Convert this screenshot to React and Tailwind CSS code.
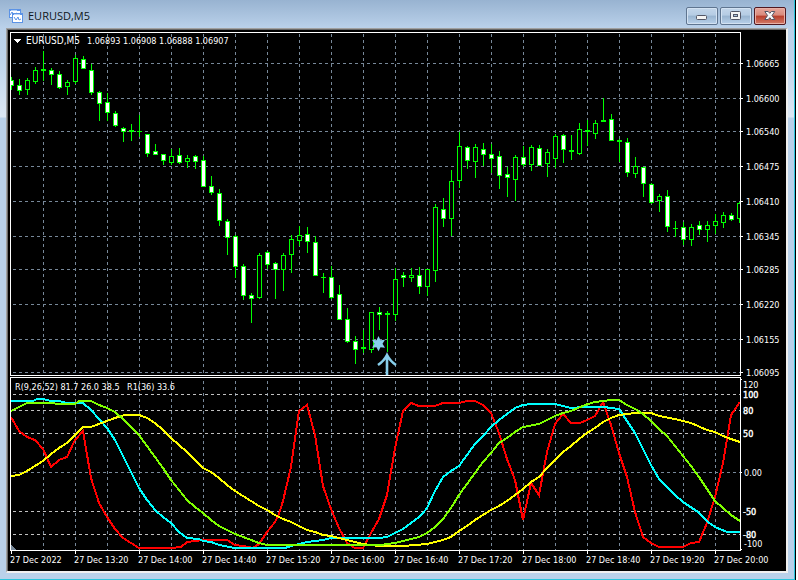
import React from "react";

// [high, body top, body bottom, low, kind] - w: filled, h: hollow
const candles = [
  [77, 80, 85, 89, "w"], [79, 85, 90, 94, "w"], [78, 80, 89, 94, "h"],
  [67, 70, 81, 83, "h"], [51, 69, 70, 80, "h"], [68, 70, 74, 84, "w"],
  [71, 74, 87, 88, "w"], [80, 82, 86, 94, "h"], [55, 58, 81, 83, "h"],
  [56, 59, 68, 68, "w"], [64, 70, 92, 94, "w"], [91, 92, 103, 120, "w"],
  [93, 102, 112, 120, "w"], [111, 113, 125, 126, "w"], [127, 128, 131, 141, "w"],
  [124, 130, 131, 140, "h"], [115, 131, 131, 136, "h"], [134, 134, 153, 156, "w"],
  [144, 151, 154, 154, "w"], [154, 154, 160, 164, "w"], [149, 156, 162, 164, "h"],
  [148, 155, 162, 163, "w"], [155, 158, 161, 167, "h"], [155, 156, 161, 168, "w"],
  [156, 160, 186, 186, "w"], [176, 186, 192, 194, "w"], [189, 193, 220, 225, "w"],
  [219, 221, 237, 254, "w"], [235, 236, 266, 277, "w"], [264, 266, 295, 299, "w"],
  [293, 295, 298, 322, "w"], [253, 255, 297, 298, "h"], [251, 252, 264, 268, "w"],
  [262, 263, 269, 298, "w"], [253, 255, 269, 290, "h"], [235, 239, 254, 272, "h"],
  [226, 235, 240, 245, "h"], [227, 234, 241, 252, "w"], [236, 242, 275, 275, "w"],
  [273, 277, 277, 292, "h"], [266, 277, 297, 298, "w"], [285, 294, 319, 319, "w"],
  [308, 319, 341, 342, "w"], [336, 341, 349, 363, "w"], [330, 347, 348, 352, "h"],
  [312, 312, 349, 352, "h"], [307, 312, 314, 329, "w"], [311, 313, 314, 351, "h"],
  [268, 279, 314, 320, "h"], [272, 275, 277, 286, "w"], [268, 275, 277, 281, "h"],
  [267, 275, 286, 293, "w"], [269, 269, 286, 295, "h"], [204, 207, 270, 281, "h"],
  [198, 209, 218, 226, "w"], [170, 181, 218, 235, "h"], [132, 146, 180, 187, "h"],
  [146, 147, 160, 168, "w"], [144, 147, 161, 177, "h"], [143, 149, 154, 165, "w"],
  [144, 154, 158, 172, "w"], [151, 156, 175, 188, "w"], [167, 174, 177, 196, "w"],
  [155, 157, 179, 200, "h"], [146, 157, 164, 166, "w"], [145, 147, 164, 170, "h"],
  [145, 148, 165, 165, "w"], [149, 152, 163, 176, "h"], [134, 136, 158, 167, "h"],
  [134, 135, 149, 162, "w"], [135, 150, 151, 159, "h"], [123, 129, 153, 154, "h"],
  [120, 130, 131, 145, "h"], [120, 123, 133, 138, "h"], [98, 120, 121, 121, "h"],
  [114, 119, 140, 140, "w"], [139, 140, 141, 161, "h"], [138, 142, 172, 176, "w"],
  [157, 166, 173, 177, "h"], [167, 167, 183, 196, "w"], [183, 184, 202, 203, "w"],
  [194, 196, 200, 211, "h"], [190, 196, 226, 231, "w"], [221, 228, 228, 236, "h"],
  [222, 227, 239, 244, "w"], [224, 227, 239, 245, "h"], [221, 225, 229, 234, "w"],
  [221, 225, 229, 241, "h"], [214, 221, 225, 233, "h"], [212, 215, 222, 227, "h"],
  [213, 215, 219, 220, "w"], [202, 203, 218, 222, "h"],
];

const prices = [
  ["1.06665", 63], ["1.06600", 98], ["1.06540", 131], ["1.06475", 166],
  ["1.06410", 201], ["1.06345", 236], ["1.06285", 269], ["1.06220", 304],
  ["1.06155", 339], ["1.06095", 372],
];

const levels = [394, 410, 433, 511, 534];

// [label, baseline, x, heavy]
const scale = [
  ["120", 388, 743, false], ["100", 398, 743, true], ["80", 414, 743, true],
  ["50", 437, 743, true], ["0.00", 476, 744, false], ["-50", 515, 743, true],
  ["-80", 538, 743, true], ["-100", 547, 744, false],
];

const times = [
  "27 Dec 2022", "27 Dec 13:20", "27 Dec 14:00", "27 Dec 14:40",
  "27 Dec 15:20", "27 Dec 16:00", "27 Dec 16:40", "27 Dec 17:20",
  "27 Dec 18:00", "27 Dec 18:40", "27 Dec 19:20", "27 Dec 20:00",
];

const gridX = Array.from({ length: 22 }, (_, i) => 43 + i * 32);

const lines = [
  {
    color: "#ff0000",
    points:
      "11,417 15,424 19,431 27,437 35,440 43,449 51,467 59,460 67,457 75,440 83,431 91,478 99,503 107,517 115,529 123,538 131,543 139,548 171,548 181,547 187,542 195,541 203,540 227,540 235,545 243,546 253,548 259,544 267,532 275,522 279,514 283,501 291,467 299,411 307,405 315,435 323,486 331,509 339,528 347,543 355,548 363,548 371,533 379,519 387,495 395,448 403,411 411,403 419,406 435,406 443,403 459,403 467,401 475,401 483,405 491,413 499,433 507,459 515,480 523,520 531,483 539,495 547,452 555,424 563,414 571,423 580,423 587,420 595,416 603,402 611,425 619,453 627,477 635,512 643,537 651,543 659,547 683,547 691,543 699,542 707,523 715,497 723,463 731,415 740,402",
  },
  {
    color: "#00ffff",
    points:
      "11,401 33,401 37,399 43,399 51,401 59,401 67,403 83,403 91,410 99,419 107,428 115,440 123,456 131,472 139,488 147,500 156,511 163,517 171,523 179,532 187,538 199,539 203,541 211,542 219,545 235,548 285,548 291,546 299,544 307,542 315,541 323,540 331,538 379,538 387,537 395,533 403,529 411,523 419,517 423,513 427,508 435,491 443,477 451,471 459,466 467,455 475,444 483,436 491,427 499,420 507,414 515,408 523,405 531,404 555,404 563,406 571,408 583,407 604,407 611,408 619,409 627,421 635,433 643,449 651,465 659,479 667,487 675,495 683,502 698,512 708,522 715,527 727,532 740,532",
  },
  {
    color: "#ffff00",
    points:
      "11,476 19,475 27,471 35,466 43,461 51,454 59,448 67,443 75,435 83,427 91,427 99,424 107,421 115,418 125,415 139,415 147,418 155,423 163,430 171,438 179,445 187,452 195,460 203,468 211,472 219,478 227,485 235,491 243,496 251,501 259,506 267,510 275,515 283,519 291,522 299,526 307,530 315,532 323,535 331,536 339,538 347,540 355,542 363,544 379,546 403,546 427,544 443,540 451,537 459,531 467,526 475,520 483,515 491,510 499,506 507,501 515,495 523,489 531,482 539,477 547,468 555,460 563,452 571,446 579,439 587,433 595,428 603,422 611,418 619,415 627,414 635,413 651,413 659,416 675,419 691,423 707,430 715,432 723,436 731,439 740,442",
  },
  {
    color: "#7fff00",
    points:
      "11,411 19,407 27,403 51,403 59,404 75,404 79,401 91,401 99,405 107,408 115,412 123,419 131,427 139,435 147,446 155,457 163,468 171,480 179,490 187,500 195,507 203,513 211,520 219,526 227,530 235,534 243,537 251,540 259,543 267,545 380,545 395,543 403,541 411,539 419,537 427,533 435,527 443,519 451,508 459,495 467,484 475,473 483,462 491,453 499,443 507,438 515,432 523,427 539,424 547,420 555,416 563,413 571,411 585,405 595,402 603,401 611,400 619,400 627,405 635,409 643,414 651,421 659,429 667,436 675,446 683,456 691,466 699,477 707,489 715,501 723,508 731,515 740,521",
  },
];

const Candle = ({ x, data }) => {
  const [high, top, bottom, low, kind] = data;
  const height = bottom - top + 1;
  return (
    <g>
      <rect x={x} y={high} width={1} height={low - high + 1} fill="#00ff00" />
      <rect x={x - 2} y={top} width={5} height={height} fill="#00ff00" />
      {height > 2 && (
        <rect
          x={x - 1}
          y={top + 1}
          width={3}
          height={height - 2}
          fill={kind === "w" ? "#ffffff" : "#000000"}
        />
      )}
    </g>
  );
};

const Chart = () => (
  <svg
    viewBox="8 30 778 541"
    className="block w-full h-auto bg-black font-['DejaVu_Sans_Condensed','DejaVu_Sans',sans-serif] text-[9px]"
    shapeRendering="crispEdges"
    role="img"
    aria-label="EURUSD five minute chart"
  >
    <defs>
      <clipPath id="price">
        <rect x="11" y="33" width="729" height="342" />
      </clipPath>
      <clipPath id="indicator">
        <rect x="11" y="378" width="729" height="172" />
      </clipPath>
    </defs>

    {/* Grid */}
    <g
      transform="translate(.5 .5)"
      stroke="#778899"
      strokeWidth="1"
      strokeDasharray="3 3"
    >
      {gridX.map((x) => (
        <g key={x}>
          <line x1={x} y1="33" x2={x} y2="375" />
          <line x1={x} y1="380" x2={x} y2="550" />
        </g>
      ))}
      {prices.map(([label, y]) => (
        <line key={label} x1="12" y1={y} x2="740" y2={y} />
      ))}
      <line x1="12" y1="472" x2="740" y2="472" />
      {levels.map((y) => (
        <line key={y} x1="12" y1={y} x2="740" y2={y} stroke="#c0c0c0" />
      ))}
    </g>

    {/* Candles */}
    <g clipPath="url(#price)">
      {candles.map((data, i) => (
        <Candle key={i} x={11 + i * 8} data={data} />
      ))}
      <g fill="#87ceeb" shapeRendering="auto">
        <path d="M378.5 336l2 4.2 4.5-.5-2.5 4 2.5 4-4.500-.4-2 4-2-4-4.500.4 2.500-4-2.500-4 4.500.5z" />
        <path
          d="M387 376V355M378 365q6-4 9-10 3 6 9 10"
          fill="none"
          stroke="#87ceeb"
          strokeWidth="2.6"
        />
      </g>
    </g>

    {/* Indicator lines */}
    <g clipPath="url(#indicator)" fill="none" strokeWidth="2">
      {lines.map((line) => (
        <polyline key={line.color} points={line.points} stroke={line.color} />
      ))}
      <path d="M11 545v5h5z" fill="#778899" />
    </g>

    {/* Frames and ticks */}
    <g fill="#ffffff">
      <rect x="10" y="32" width="731" height="1" />
      <rect x="10" y="375" width="731" height="1" />
      <rect x="10" y="377" width="731" height="1" />
      <rect x="10" y="550" width="731" height="1" />
      <rect x="10" y="32" width="1" height="344" />
      <rect x="10" y="377" width="1" height="174" />
      <rect x="740" y="32" width="1" height="344" />
      <rect x="740" y="377" width="1" height="174" />
      {prices.map(([label, y]) => (
        <rect key={label} x="741" y={y} width="2" height="1" />
      ))}
      {[379, 472, 549].map((y) => (
        <rect key={y} x="741" y={y} width="1" height="1" />
      ))}
      {times.map((label, i) => (
        <rect key={label} x={11 + i * 64} y="551" width="1" height="3" />
      ))}
      <path d="M14 39h7l-3 4h-1z" />
    </g>

    {/* Labels */}
    <g fill="#ffffff">
      <text x="26" y="44" className="text-[10px]">EURUSD,M5</text>
      <text x="87" y="44">1.06893 1.06908 1.06888 1.06907</text>
      <text x="15" y="390">R(9,26,52) 81.7 26.0 38.5</text>
      <text x="127" y="390">R1(36) 33.6</text>
      {prices.map(([label, y]) => (
        <text key={label} x="746" y={y + 4}>{label}</text>
      ))}
      {scale.map(([label, y, x, heavy]) => (
        <text
          key={label}
          x={x}
          y={y}
          stroke={heavy ? "#ffffff" : "none"}
          strokeWidth="0.4"
        >
          {label}
        </text>
      ))}
      {times.map((label, i) => (
        <text key={label} x={10 + i * 64} y="563">{label}</text>
      ))}
    </g>
  </svg>
);

const ChartIcon = () => (
  <svg width="14" height="14" viewBox="0 0 14 14" shapeRendering="crispEdges">
    <path d="M0 0h12v9H0z" fill="#5b93e6" />
    <path d="M1 2h10v6H1z" fill="#ffffff" />
    <path d="M2 1h6v1H2z" fill="#b8d3f8" />
    <path d="M1 6l2-3 2 3 2-2 2 1" fill="none" stroke="#5b93e6" shapeRendering="auto" />
    <path d="M3 4h11v10H3z" fill="#5b93e6" />
    <path d="M4 6h9v7H4z" fill="#ffffff" />
    <path d="M5 5h6v1H5z" fill="#b8d3f8" />
    <path d="M5 8l2 3 2-3 1 3 2-1" fill="none" stroke="#5b93e6" shapeRendering="auto" />
  </svg>
);

const buttonStyle =
  "flex h-[18px] w-8 items-center justify-center rounded-[2px] border border-[#5f7590] bg-[linear-gradient(#c3d6ea_0%,#b5cce4_45%,#98b4d0_50%,#b9d1ea_100%)] shadow-[inset_0_0_0_1px_#d3e2f2]";

const closeStyle =
  "flex h-[18px] w-8 items-center justify-center rounded-[2px] border border-[#501820] bg-[linear-gradient(#e6a69b_0%,#d98a7c_45%,#b83d2a_50%,#d27b69_100%)] shadow-[inset_0_0_0_1px_#e8b0a6]";

const TitleBar = () => (
  <header className="flex h-7 items-center justify-between pl-[9px] pr-2">
    <div className="flex items-center gap-[5px] pt-1">
      <ChartIcon />
      <h1 className="font-['Open_Sans','Noto_Sans',sans-serif] text-[11px] leading-4 text-[#0f1620]">
        EURUSD,M5
      </h1>
    </div>
    <div className="flex gap-0.5 pt-1">
      <button type="button" aria-label="Minimize" className={buttonStyle}>
        <svg width="12" height="12" viewBox="0 0 12 12">
          <rect x=".5" y="5.5" width="10" height="4" rx="1" fill="#f4f4f4" stroke="#535666" />
        </svg>
      </button>
      <button type="button" aria-label="Maximize" className={buttonStyle}>
        <svg width="12" height="12" viewBox="0 0 12 12">
          <rect x=".5" y="1.5" width="10" height="8" rx="1" fill="#f4f4f4" stroke="#535666" />
          <rect x="3.5" y="4.5" width="4" height="2" fill="#a9c2dc" stroke="#535666" />
        </svg>
      </button>
      <button type="button" aria-label="Close" className={closeStyle}>
        <svg width="12" height="12" viewBox="0 0 12 12">
          <path
            d="M.8 1.500h3.400L5.800 3.300l1.600-1.800h3.400L8 5.500l2.800 4H7.400L5.800 7.700 4.200 9.500H.8l2.800-4z"
            fill="#f8f8f8"
            stroke="#535666"
            strokeLinejoin="round"
          />
        </svg>
      </button>
    </div>
  </header>
);

const App = () => {
  return (
    <main className="bg-white pr-0.5">
      <div className="border-r border-black">
        <div className="border-r border-b border-[#2cc5dc] bg-[linear-gradient(#98b3d1,#bad1ea_28px,#bed4eb_60px,#dde8f4_117px,#b9d1ea_118px)]">
          <TitleBar />
          <div className="mx-1.5 mb-1.5 border-t border-l border-r-2 border-b-2 border-t-[#a0a0a0] border-l-[#a0a0a0] border-r-[#f0f0f0] border-b-[#f0f0f0]">
            <div className="border-t border-l border-[#696969]">
              <Chart />
            </div>
          </div>
        </div>
      </div>
    </main>
  );
};

export default App;
